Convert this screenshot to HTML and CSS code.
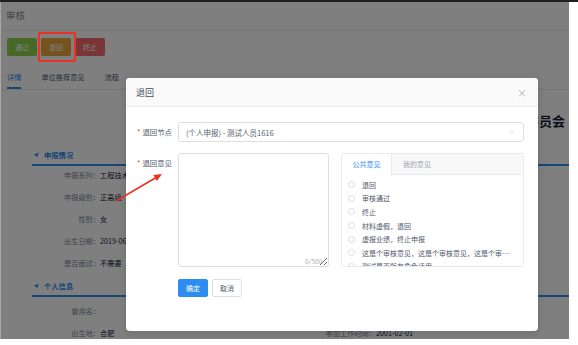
FILE: index.html
```html
<!DOCTYPE html>
<html lang="zh-CN">
<head>
    <meta charset="UTF-8">
    <meta name="viewport" content="width=device-width, initial-scale=1.0">
    <title>审核</title>
    <link rel="stylesheet" href="styles.css">
</head>
<body>
    <div class="frame">
        <div class="page">
            <div class="page-header">审核</div>
            <div class="actions">
                <button class="btn btn-pass">通过</button>
                <button class="btn btn-back">退回</button>
                <button class="btn btn-stop">终止</button>
            </div>
            <div class="tabs">
                <span class="tab active">详情</span>
                <span class="tab">单位推荐意见</span>
                <span class="tab">流程</span>
            </div>
            <div class="detail">
                <div class="detail-title">安徽省工程系列高级职称评审委员会</div>

                <div class="section">
                    <div class="section-title">
                        <svg class="plane" viewBox="0 0 12 12"><path d="M0.5 6.2 L11.5 0.8 L8.2 11 L5.6 7.2 Z M5.6 7.2 L11.5 0.8" /></svg>
                        申报情况
                    </div>
                    <div class="info-list">
                        <div class="info-row"><span class="info-label">申报系列：</span><span class="info-value">工程技术（建筑工程）</span></div>
                        <div class="info-row"><span class="info-label">申报级别：</span><span class="info-value">正高级</span></div>
                        <div class="info-row"><span class="info-label">性别：</span><span class="info-value">女</span></div>
                        <div class="info-row"><span class="info-label">出生日期：</span><span class="info-value">2019-06-12</span></div>
                        <div class="info-row"><span class="info-label">是否面试：</span><span class="info-value">不需要</span></div>
                    </div>
                </div>

                <div class="section section-person">
                    <div class="section-title">
                        <svg class="plane" viewBox="0 0 12 12"><path d="M0.5 6.2 L11.5 0.8 L8.2 11 L5.6 7.2 Z M5.6 7.2 L11.5 0.8" /></svg>
                        个人信息
                    </div>
                    <div class="info-list info-grid">
                        <div class="info-row"><span class="info-label">曾用名：</span><span class="info-value"></span></div>
                        <div class="info-row"><span class="info-label">民族：</span><span class="info-value">汉族</span></div>
                        <div class="info-row"><span class="info-label">出生地：</span><span class="info-value">合肥</span></div>
                        <div class="info-row"><span class="info-label">参加工作时间：</span><span class="info-value">2001-02-01</span></div>
                    </div>
                </div>
            </div>
        </div>

        <div class="mask"></div>

        <div class="modal">
            <div class="modal-header">
                <span class="modal-title">退回</span>
                <span class="modal-close">×</span>
            </div>
            <div class="modal-body">
                <div class="form-row">
                    <label class="form-label"><i>*</i>退回节点</label>
                    <div class="select">
                        <span>(个人申报) - 测试人员1616</span>
                        <svg class="chevron" viewBox="0 0 10 6"><path d="M1 1 L5 5 L9 1" /></svg>
                    </div>
                </div>
                <div class="form-row">
                    <label class="form-label"><i>*</i>退回意见</label>
                    <div class="opinion">
                        <div class="textarea-wrap">
                            <textarea class="textarea"></textarea>
                            <span class="count">0/500</span>
                        </div>
                        <div class="panel">
                            <div class="panel-tabs">
                                <span class="panel-tab active">公共意见</span>
                                <span class="panel-tab">我的意见</span>
                            </div>
                            <div class="panel-list">
                                <div class="radio-item"><span class="radio"></span><span class="radio-text">退回</span></div>
                                <div class="radio-item"><span class="radio"></span><span class="radio-text">审核通过</span></div>
                                <div class="radio-item"><span class="radio"></span><span class="radio-text">终止</span></div>
                                <div class="radio-item"><span class="radio"></span><span class="radio-text">材料虚假，退回</span></div>
                                <div class="radio-item"><span class="radio"></span><span class="radio-text">虚报业绩，终止申报</span></div>
                                <div class="radio-item"><span class="radio"></span><span class="radio-text">这是个审核意见，这是个审核意见，这是个审核意见</span></div>
                                <div class="radio-item"><span class="radio"></span><span class="radio-text">测试是否所有角色适用</span></div>
                            </div>
                        </div>
                    </div>
                </div>
                <div class="modal-footer">
                    <button class="btn-primary">确定</button>
                    <button class="btn-default">取消</button>
                </div>
            </div>
        </div>

        <!-- annotations drawn over the screenshot -->
        <div class="mark-box"></div>
        <svg class="mark-arrow" width="569" height="337" viewBox="0 0 569 337">
            <line x1="115" y1="199" x2="156" y2="175" />
            <polygon points="161,172 155.9,179.1 152.3,173" />
        </svg>
    </div>
</body>
</html>
```

FILE: styles.css
```css
:root {
    --primary-color: #2d8cf0;
    --border-color: #dcdee2;
    --line-color: #e8eaec;
    --text-color: #515a6e;
    --mark-color: #ea3323;
}
body {
    margin: 0;
    border-top: 2px solid #1f1f1f;
    background-color: #ffffff;
    font-family: "Noto Sans CJK SC", "Noto Sans", sans-serif;
    color: var(--text-color);
}
.frame {
    position: relative;
    width: 568px;
    height: 337px;
    overflow: hidden;
    border-left: 1px solid #a8a8a8;
    background-color: #ffffff;
}

/* page under the mask */
.page-header {
    height: 28px;
    line-height: 26px;
    padding-left: 5px;
    font-size: 9.5px;
    color: #8a8a8a;
    border-bottom: 1px solid #ececec;
}
.actions {
    display: flex;
    gap: 4px;
    padding: 7px 6px 0;
}
.btn {
    width: 30px;
    height: 18px;
    padding: 0;
    border: none;
    border-radius: 2px;
    font-family: inherit;
    font-size: 7px;
    color: #ffffff;
}
.btn-pass {
    background-color: #8ed14e;
}
.btn-back {
    background-color: #eaa43c;
}
.btn-stop {
    background-color: #f56c6c;
}
.tabs {
    display: flex;
    gap: 20px;
    margin-top: 14px;
    padding-left: 6px;
    border-bottom: 1px solid var(--line-color);
}
.tab {
    font-size: 7.2px;
    line-height: 14px;
    padding-bottom: 3px;
    border-bottom: 2px solid transparent;
    color: #515a6e;
}
.tab.active {
    color: var(--primary-color);
    border-bottom-color: var(--primary-color);
}
.detail {
    padding-left: 31px;
}
.detail-title {
    margin-top: 23px;
    padding-right: 4px;
    text-align: right;
    font-size: 13px;
    font-weight: bold;
    line-height: 16px;
    color: #17233d;
}
.section {
    margin-top: 17px;
}
.section-person {
    margin-top: 5px;
}
.section-title {
    display: flex;
    align-items: center;
    gap: 5px;
    height: 18px;
    padding-left: 1px;
    font-size: 7.3px;
    font-weight: bold;
    color: var(--primary-color);
    border-bottom: 2px solid var(--primary-color);
}
.plane {
    width: 6px;
    height: 6px;
    fill: var(--primary-color);
}
.info-row {
    display: flex;
    line-height: 18px;
    margin-bottom: 4px;
    font-size: 7.2px;
}
.info-label {
    width: 68px;
    text-align: right;
    color: #808695;
}
.info-value {
    color: #17233d;
}
.info-grid {
    display: grid;
    grid-template-columns: 276px 1fr;
    padding-top: 5px;
}

/* mask and dialog */
.mask {
    position: absolute;
    inset: 0;
    background-color: rgba(0, 0, 0, 0.5);
}
.modal {
    position: absolute;
    left: 125px;
    top: 76px;
    width: 412px;
    height: 253px;
    background-color: #ffffff;
    border-radius: 4px;
    box-shadow: 0 2px 8px rgba(0, 0, 0, 0.15);
    overflow: hidden;
}
.modal-header {
    display: flex;
    justify-content: space-between;
    align-items: center;
    height: 28px;
    padding: 0 11px 0 10px;
    background-color: #fafafa;
    border-bottom: 1px solid var(--line-color);
}
.modal-title {
    font-size: 9px;
    color: #464c5b;
}
.modal-close {
    font-size: 10px;
    color: #b0b4bb;
}
.modal-body {
    padding: 15px 14px 0 0;
}
.form-row {
    display: flex;
    margin-bottom: 11px;
}
.form-label {
    flex: none;
    width: 46px;
    padding-right: 6px;
    text-align: right;
    white-space: nowrap;
    font-size: 7.4px;
    line-height: 20px;
    color: #515a6e;
}
.form-label i {
    font-style: normal;
    color: #ed4014;
    margin-right: 2px;
}
.select {
    flex: 1;
    display: flex;
    justify-content: space-between;
    align-items: center;
    height: 18px;
    padding: 0 8px 0 7px;
    border: 1px solid var(--border-color);
    border-radius: 3px;
    font-size: 7.5px;
}
.chevron {
    width: 7px;
    height: 4px;
    fill: none;
    stroke: #c5c8ce;
    stroke-width: 1;
}
.opinion {
    flex: 1;
    min-width: 0;
    display: flex;
    gap: 12px;
    height: 114px;
}
.textarea-wrap {
    flex: none;
    position: relative;
    width: 151px;
}
.textarea {
    display: block;
    width: 100%;
    height: 100%;
    box-sizing: border-box;
    border: 1px solid var(--border-color);
    border-radius: 3px;
    outline: none;
}
.count {
    position: absolute;
    right: 7px;
    bottom: 1px;
    font-size: 6.5px;
    color: #a8abb2;
}
.panel {
    flex: 1;
    min-width: 0;
    display: flex;
    flex-direction: column;
    border: 1px solid var(--line-color);
    border-radius: 2px;
}
.panel-tabs {
    display: flex;
    height: 20px;
    background-color: #f8f8f9;
    border-bottom: 1px solid var(--line-color);
}
.panel-tab {
    font-size: 7px;
    line-height: 20px;
    padding: 0 11px;
    color: #9ea3ab;
}
.panel-tab.active {
    width: 49px;
    padding: 0;
    text-align: center;
    background-color: #ffffff;
    color: var(--primary-color);
    border-right: 1px solid var(--line-color);
    margin-bottom: -1px;
}
.panel-list {
    flex: 1;
    min-height: 0;
    overflow-y: scroll;
    padding: 3px 0 12px 6px;
}
.panel-list::-webkit-scrollbar {
    width: 4px;
}
.panel-list::-webkit-scrollbar-thumb {
    background-color: #dcdcdc;
    border-radius: 2px;
}
.radio-item {
    display: flex;
    align-items: center;
    height: 13.6px;
    padding-right: 14px;
    font-size: 7px;
}
.radio {
    flex: none;
    width: 5px;
    height: 5px;
    margin-right: 7px;
    border: 1px solid var(--border-color);
    border-radius: 50%;
}
.radio-text {
    min-width: 0;
    white-space: nowrap;
    overflow: hidden;
    text-overflow: ellipsis;
}
.modal-footer {
    display: flex;
    gap: 4px;
    margin-top: 12px;
    padding-left: 52px;
}
.btn-primary,
.btn-default {
    width: 30px;
    height: 18px;
    padding: 0;
    border-radius: 2px;
    font-family: inherit;
    font-size: 7px;
}
.btn-primary {
    border: 1px solid var(--primary-color);
    background-color: var(--primary-color);
    color: #ffffff;
}
.btn-default {
    border: 1px solid var(--border-color);
    background-color: #ffffff;
    color: var(--text-color);
}

/* annotations */
.mark-box {
    position: absolute;
    left: 37px;
    top: 30px;
    width: 34px;
    height: 26px;
    border: 2px solid var(--mark-color);
    border-radius: 1px;
}
.mark-arrow {
    position: absolute;
    left: 0;
    top: 0;
}
.mark-arrow line {
    stroke: var(--mark-color);
    stroke-width: 1.6;
}
.mark-arrow polygon {
    fill: var(--mark-color);
}
```
